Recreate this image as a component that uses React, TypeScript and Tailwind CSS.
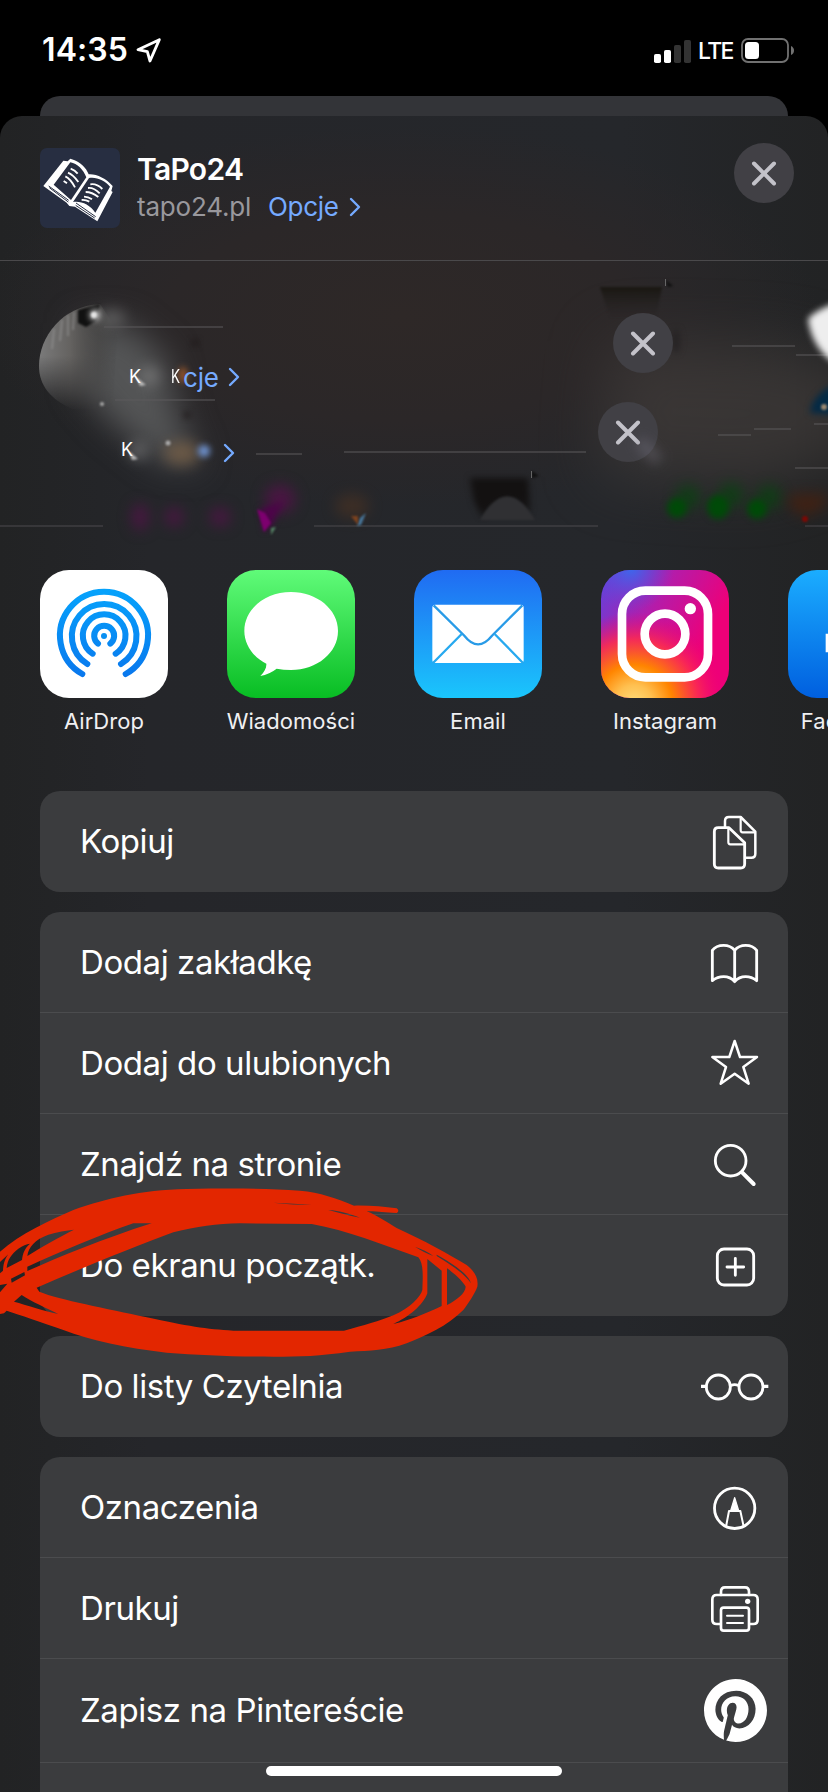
import type { ReactNode } from "react";
import { FaPinterest } from "react-icons/fa";

function StatusBar() {
  return (
    <div className="flex h-24 items-start justify-between pl-[42px] pr-[33px] pt-[30px] text-white">
      <div className="flex items-center">
        <span className="text-[32px] font-semibold leading-[40px] tracking-[0.1px]">14:35</span>
        <svg className="ml-[6px] h-[30px] w-[30px]" viewBox="400 104 90 90" fill="none" stroke="#fff" strokeWidth="8.500" strokeLinejoin="round">
          <path d="M476 118 L412 148 L440 154 L448 182 Z" />
        </svg>
      </div>
      <div className="flex items-center pt-px">
        <svg className="h-[24px] w-[38px]" viewBox="0 0 38 24">
          <rect x="0" y="15" width="7" height="9" rx="1.8" fill="#fff" />
          <rect x="10" y="11" width="7" height="13" rx="1.8" fill="#fff" />
          <rect x="20" y="6" width="7" height="18" rx="1.8" fill="#333" />
          <rect x="30" y="1" width="7" height="23" rx="1.8" fill="#333" />
        </svg>
        <span className="ml-[6px] w-[38px] whitespace-nowrap pt-px text-[23px] font-medium leading-[38px] tracking-[-1.7px]">LTE</span>
        <svg className="ml-[5px] h-[26px] w-[54px]" viewBox="0 0 54 26">
          <rect x="1" y="1" width="46" height="23" rx="6" fill="none" stroke="#717171" strokeWidth="1.8" />
          <rect x="4" y="4" width="14" height="17" rx="3.5" fill="#fff" />
          <path d="M50 8 Q53 9.500 53 12.500 Q53 15.500 50 17 Z" fill="#717171" />
        </svg>
      </div>
    </div>
  );
}

function CloseButton({ className = "" }: { className?: string }) {
  return (
    <button className={`flex h-[60px] w-[60px] items-center justify-center rounded-full bg-[#414045] ${className}`}>
      <svg className="h-[26px] w-[26px]" viewBox="0 0 26 26" stroke="#c3c2c9" strokeWidth="4" strokeLinecap="round">
        <path d="M3 3.500 L23 23.500 M23 3.500 L3 23.500" />
      </svg>
    </button>
  );
}

function Chevron({ className = "" }: { className?: string }) {
  return (
    <svg className={`h-[20px] w-[12px] ${className}`} viewBox="0 0 12 20" fill="none" stroke="#75aaff" strokeWidth="2.4" strokeLinecap="round" strokeLinejoin="round">
      <path d="M2 2 L10 10 L2 18" />
    </svg>
  );
}

function BookLogo() {
  return (
    <svg className="h-[80px] w-[80px] rounded-[7px] bg-[#272e41]" viewBox="120 444 240 240">
      <path fill="#fff" d="M190 482 L203 484 L211 476 L222 480 C240 486 259 503 266 523 C288 521 318 535 338 558 L334 573 L338 576 L292 664 L225 620 L208 618 L200 608 L130 558 Z" />
      <path fill="#272e41" d="M211 487 C232 491 250 509 259 532 L213 600 L161 554 Z M267 534 C289 530 315 541 330 560 L286 638 C270 614 243 602 219 606 Z" />
      <path fill="none" stroke="#272e41" strokeWidth="3" d="M146 558 L206 601 M148 563 L205 606 M228 609 L287 650 M227 616 L284 654" />
      <path fill="none" stroke="#fff" strokeWidth="5.500" d="M212 506 Q225 511 233 521 M204 518 Q220 525 235 546 M196 529 Q212 537 225 562 M191 543 L201 550 M271 553 Q290 550 307 567 M264 564 Q281 562 299 580 M257 576 Q276 576 295 591 M252 590 Q264 590 276 598 M245 600 Q257 599 268 605" />
    </svg>
  );
}

function SheetHeader() {
  return (
    <header className="flex h-[145px] items-start border-b border-[#4a494b] pl-10 pr-[34px] pt-[27px]">
      <div className="pt-[5px]">
        <BookLogo />
      </div>
      <div className="ml-[17px] flex flex-col pt-[7px]">
        <h1 className="text-[30px] font-semibold leading-[38px] tracking-[-0.7px] text-white">TaPo24</h1>
        <div className="flex items-center pt-px text-[26px] leading-[36px]">
          <span className="w-[131px] whitespace-nowrap tracking-[-0.2px] text-[#99989d]">tapo24.pl</span>
          <span className="w-[81px] tracking-[-0.3px] text-[#75aaff]">Opcje</span>
          <Chevron />
        </div>
      </div>
      <div className="ml-auto">
        <CloseButton />
      </div>
    </header>
  );
}

function SmudgeLayer() {
  return (
    <svg className="absolute inset-0 h-[290px] w-[828px]" viewBox="0 0 828 290">
      <defs>
        <filter id="b1" colorInterpolationFilters="sRGB" x="-50%" y="-50%" width="200%" height="200%"><feGaussianBlur stdDeviation="1" /></filter>
        <filter id="b2" colorInterpolationFilters="sRGB" x="-100%" y="-100%" width="300%" height="300%"><feGaussianBlur stdDeviation="3" /></filter>
        <filter id="b5" colorInterpolationFilters="sRGB" filterUnits="userSpaceOnUse" x="-50" y="-50" width="930" height="390"><feGaussianBlur stdDeviation="7" /></filter>
        <filter id="b14" colorInterpolationFilters="sRGB" filterUnits="userSpaceOnUse" x="-100" y="-100" width="1100" height="500"><feGaussianBlur stdDeviation="16" /></filter>
        <filter id="b30" colorInterpolationFilters="sRGB" filterUnits="userSpaceOnUse" x="-100" y="-100" width="1100" height="500"><feGaussianBlur stdDeviation="30" /></filter>
        <linearGradient id="face" x1="0" x2="1">
          <stop offset="0" stopColor="#7a7a7a" />
          <stop offset="0.4" stopColor="#646260" />
          <stop offset="0.75" stopColor="#4a4948" stopOpacity="0.7" />
          <stop offset="1" stopColor="#434343" stopOpacity="0" />
        </linearGradient>
        <linearGradient id="faceFade" x1="0" x2="0" y1="0" y2="1">
          <stop offset="0.5" stopColor="#fff" />
          <stop offset="1" stopColor="#000" />
        </linearGradient>
        <mask id="faceMask" maskUnits="userSpaceOnUse" x="30" y="40" width="100" height="110">
          <rect x="30" y="40" width="100" height="110" fill="url(#faceFade)" />
        </mask>
        <linearGradient id="fadeUp" x1="0" x2="0" y1="0" y2="1">
          <stop offset="0" stopColor="#1a1712" />
          <stop offset="1" stopColor="#252222" stopOpacity="0" />
        </linearGradient>
      </defs>
      <path filter="url(#b14)" fill="#545556" d="M78 62 L125 62 L165 95 L180 160 L200 205 L160 200 L110 160 L80 125 Z" />
      <path filter="url(#b30)" fill="#413c3a" opacity="0.7" d="M610 80 L790 85 L860 110 L860 190 L760 225 L600 215 Z" />
      <path mask="url(#faceMask)" fill="url(#face)" d="M39 105 C39 76 62 45 100 43 L118 70 L112 148 L72 148 C50 138 39 124 39 105 Z" />
      <path d="M78 49 L100 43 L96 60 L86 66 L78 62 Z" fill="#111" filter="url(#b1)" />
      <path d="M54 68 L52 88 M62 59 L60 80 M68 54 L68 75 M74 51 L73 69" stroke="#999" strokeWidth="2" filter="url(#b1)" opacity="0.5" />
      <circle cx="95" cy="54" r="5" fill="#eee" filter="url(#b2)" />
      <circle cx="94" cy="54" r="3" fill="#eee" filter="url(#b1)" />
      <ellipse cx="112" cy="57" rx="13" ry="8" fill="#777" opacity="0.6" filter="url(#b5)" />
      <path d="M104 66.500 H223 M115 139.500 H215 M256 193.500 H302 M344 191.500 H586 M732 85.500 H795 M796 94.500 H828 M718 174.500 H751 M754 168.500 H791 M795 207.500 H828 M814 163.500 H828" transform="translate(0 -0.500)" stroke="#5d5b5d" strokeWidth="1" />
      <path d="M0 265 H103 M314 265 H598 M805 265 H828" stroke="#4c4b4e" strokeWidth="1.200" />
      <circle cx="150" cy="115" r="10" fill="#999" opacity="0.45" filter="url(#b5)" />
      <path d="M136 116 L146 124 L140 125 Z M129 190 L138 198 L132 199 Z" fill="#bbb" filter="url(#b1)" />
      <ellipse cx="138" cy="190" rx="9" ry="9" fill="#999" opacity="0.45" filter="url(#b5)" />
      <circle cx="102" cy="143" r="2" fill="#aaa" filter="url(#b1)" />
      <ellipse cx="183" cy="114" rx="4" ry="8" fill="#995529" filter="url(#b2)" />
      <ellipse cx="182" cy="192" rx="18" ry="12" fill="#755f48" opacity="0.8" filter="url(#b5)" />
      <circle cx="168" cy="182" r="2.500" fill="#aaa" filter="url(#b1)" />
      <ellipse cx="204" cy="190" rx="6" ry="6" fill="#6d91ce" filter="url(#b2)" />
      <circle cx="195" cy="82" r="3" fill="#1c1717" filter="url(#b2)" />
      <circle cx="187" cy="154" r="3" fill="#1c1717" filter="url(#b2)" />
      <g filter="url(#b5)" fill="#4a1643">
        <ellipse cx="140" cy="256" rx="8" ry="13" />
        <ellipse cx="174" cy="256" rx="9" ry="9" />
        <ellipse cx="220" cy="256" rx="10" ry="9" />
        <ellipse cx="280" cy="238" rx="15" ry="14" />
      </g>
      <path d="M260 248 L284 240 L273 262 L264 271 Z" fill="#4d0449" filter="url(#b2)" />
      <path d="M257 248 L265 252 L271 262 L264 271 Z" fill="#7d006f" filter="url(#b1)" />
      <path d="M276 266 L271 274 L271 267 Z" fill="#548364" filter="url(#b1)" />
      <ellipse cx="352" cy="245" rx="17" ry="12" fill="#4c3322" opacity="0.6" filter="url(#b5)" />
      <path d="M360 257 L366 252 L361 264 L357 265 Z" fill="#48779c" filter="url(#b1)" />
      <path d="M351 255 L358 255 L358 264 Z" fill="#7d431f" filter="url(#b1)" />
      <path d="M600 26 H662 L656 57 H610 Z" fill="url(#fadeUp)" filter="url(#b1)" />
      <path d="M470 217 H528 L530 252 Q507 222 482 256 L474 240 Z" fill="#131111" filter="url(#b2)" />
      <path d="M480 259 Q507 212 535 259 Z" fill="#303033" filter="url(#b1)" />
      <path d="M666 19 L673 25 L668 26 Z M532 210 L539 215 L532 217 Z" fill="#111" filter="url(#b1)" />
      <path d="M665.500 18 V25 M531.500 210 V217" stroke="#666" />
      <ellipse cx="676" cy="80" rx="4" ry="12" fill="#262324" filter="url(#b2)" />
      <g filter="url(#b5)" fill="#0a4211" opacity="0.8">
        <ellipse cx="688" cy="236" rx="12" ry="12" />
        <ellipse cx="731" cy="234" rx="12" ry="12" />
        <ellipse cx="769" cy="236" rx="12" ry="12" />
      </g>
      <g filter="url(#b2)" fill="#004a08">
        <ellipse cx="677" cy="247" rx="10" ry="10" />
        <ellipse cx="718" cy="246" rx="11" ry="12" />
        <ellipse cx="757" cy="248" rx="10" ry="10" />
      </g>
      <path d="M790 233 H828 L826 245 L805 256 L788 245 Z" fill="#46200f" opacity="0.8" filter="url(#b5)" />
      <circle cx="805" cy="258" r="3" fill="#7d0804" filter="url(#b1)" />
      <path d="M808 58 Q814 50 836 42 V103 Q812 88 808 58 Z" fill="#eee" filter="url(#b2)" />
      <path d="M840 121 Q812 132 810 152 L840 154 Z" fill="#042a45" filter="url(#b2)" />
      <circle cx="824" cy="146" r="3" fill="#9c8970" filter="url(#b1)" />
    </svg>
  );
}

function Suggestions() {
  return (
    <section className="relative h-[289px]">
      <SmudgeLayer />
      <span className="absolute left-[129px] top-[106px] text-[18px] leading-[20px] text-white">K</span>
      <span className="absolute left-[171px] top-[106px] w-[9px] origin-left scale-x-75 text-[18px] leading-[20px] text-white">K</span>
      <span className="absolute left-[183px] top-[98px] text-[26px] leading-[38px] tracking-[-0.2px] text-[#75aaff]">cje</span>
      <Chevron className="absolute left-[228px] top-[106px]" />
      <span className="absolute left-[121px] top-[179px] text-[18px] leading-[20px] text-white">K</span>
      <Chevron className="absolute left-[223px] top-[182px]" />
      <CloseButton className="absolute left-[613px] top-[52px]" />
      <CloseButton className="absolute left-[598px] top-[141px]" />
      <span className="absolute left-[635px] top-[184px] h-3 w-7 rotate-45 bg-[#777582]/40 blur-[6px]" />
    </section>
  );
}

function AirDropIcon() {
  return (
    <svg className="h-full w-full" viewBox="120 60 384 384" fill="none" stroke="url(#air)" strokeWidth="18" strokeLinecap="round">
      <defs>
        <linearGradient id="air" gradientUnits="userSpaceOnUse" x1="0" y1="116" x2="0" y2="382">
          <stop offset="0" stopColor="#06a3fc" />
          <stop offset="1" stopColor="#0977ed" />
        </linearGradient>
      </defs>
      <rect x="120" y="60" width="384" height="384" fill="#fff" stroke="none" />
      <path d="M247 372 A132 132 0 1 1 377 372" />
      <path d="M262 342 A97 97 0 1 1 363 342" />
      <path d="M278 311 A64 64 0 1 1 347 311" />
      <path d="M294 281 A30 30 0 1 1 331 281" />
      <circle cx="312" cy="258" r="9" fill="#0990f3" stroke="none" />
    </svg>
  );
}

function MessagesIcon() {
  return (
    <svg className="h-full w-full" viewBox="681 60 384 384">
      <defs>
        <linearGradient id="msg" x1="0" x2="0" y1="0" y2="1">
          <stop offset="0" stopColor="#60fb79" />
          <stop offset="1" stopColor="#08bd23" />
        </linearGradient>
      </defs>
      <rect x="681" y="60" width="384" height="384" fill="url(#msg)" />
      <path fill="#fff" d="M873 126 C951 126 1014 178 1014 243 C1014 308 951 360 873 360 Q850 360 830 356 Q808 373 781 378 C793 366 800 354 799 341 C759 321 733 284 733 243 C733 178 795 126 873 126 Z" />
    </svg>
  );
}

function MailIcon() {
  return (
    <svg className="h-full w-full" viewBox="0 60 384 384">
      <defs>
        <linearGradient id="mail" x1="0" x2="0" y1="0" y2="1">
          <stop offset="0" stopColor="#206bf2" />
          <stop offset="1" stopColor="#1ac6fc" />
        </linearGradient>
      </defs>
      <rect y="60" width="384" height="384" fill="url(#mail)" />
      <rect x="55" y="164" width="274" height="175" rx="9" fill="#fff" />
      <path d="M59 166 L151 257 Q192 309 234 257 L325 166" fill="none" stroke="#299be7" strokeWidth="7" />
      <path d="M57 339 L143 252 M327 339 L242 252" fill="none" stroke="#27a9ef" strokeWidth="7" />
    </svg>
  );
}

function InstagramIcon() {
  return (
    <svg className="h-full w-full" viewBox="561 60 384 384" fill="none" stroke="#fff" strokeWidth="26">
      <defs>
        <linearGradient id="igBase" x1="0" y1="0" x2="0.850" y2="0.500">
          <stop offset="0" stopColor="#5b45e0" />
          <stop offset="0.500" stopColor="#b41caa" />
          <stop offset="1" stopColor="#ee0078" />
        </linearGradient>
        <radialGradient id="igWarm" gradientUnits="userSpaceOnUse" cx="660" cy="460" r="275">
          <stop offset="0" stopColor="#ffdc7a" />
          <stop offset="0.200" stopColor="#ffc050" />
          <stop offset="0.420" stopColor="#ff8500" />
          <stop offset="0.700" stopColor="#fb2c50" stopOpacity="0.900" />
          <stop offset="1" stopColor="#ed0078" stopOpacity="0" />
        </radialGradient>
        <radialGradient id="igBlue" gradientUnits="userSpaceOnUse" cx="650" cy="55" r="130">
          <stop offset="0" stopColor="#3b68ed" />
          <stop offset="1" stopColor="#6644d6" stopOpacity="0" />
        </radialGradient>
      </defs>
      <rect x="561" y="60" width="384" height="384" fill="url(#igBase)" stroke="none" />
      <rect x="561" y="60" width="384" height="384" fill="url(#igBlue)" stroke="none" />
      <rect x="561" y="60" width="384" height="384" fill="url(#igWarm)" stroke="none" />
      <rect x="624" y="122" width="258" height="260" rx="70" />
      <circle cx="753" cy="252" r="61" />
      <circle cx="829" cy="176" r="17" fill="#fff" stroke="none" />
    </svg>
  );
}

function FacebookIcon() {
  return (
    <svg className="h-full w-full" viewBox="0 0 384 384">
      <defs>
        <linearGradient id="fb" x1="0" x2="0" y1="0" y2="1">
          <stop offset="0" stopColor="#1badff" />
          <stop offset="1" stopColor="#005fdf" />
        </linearGradient>
      </defs>
      <rect width="384" height="384" fill="url(#fb)" />
      <path fill="#fff" d="M113 191 H160 V155 Q160 84 232 84 H275 V132 H245 Q220 132 220 160 V191 H274 L265 247 H220 V384 H160 V247 H113 Z" />
    </svg>
  );
}

const apps: { name: string; icon: ReactNode }[] = [
  { name: "AirDrop", icon: <AirDropIcon /> },
  { name: "Wiadomości", icon: <MessagesIcon /> },
  { name: "Email", icon: <MailIcon /> },
  { name: "Instagram", icon: <InstagramIcon /> },
  { name: "Facebook", icon: <FacebookIcon /> },
];

function AppRow() {
  return (
    <section className="flex h-[241px] gap-[59px] overflow-hidden pl-10 pt-5">
      {apps.map((app) => (
        <div key={app.name} className="flex w-32 shrink-0 flex-col items-center">
          <div className="h-32 w-32 overflow-hidden rounded-[29px]">{app.icon}</div>
          <span className="mt-[9px] whitespace-nowrap text-[22px] leading-[28px] tracking-[0.05px] text-[#f0f0f2]">{app.name}</span>
        </div>
      ))}
    </section>
  );
}

function Glyph({ viewBox, width = 8.5, children }: { viewBox: string; width?: number; children: ReactNode }) {
  return (
    <svg className="h-[80px] w-[80px]" viewBox={viewBox} fill="none" stroke="#fff" strokeWidth={width} strokeLinecap="round" strokeLinejoin="round">
      {children}
    </svg>
  );
}

const copyGlyph = (
  <Glyph viewBox="405 95 240 240">
    <path d="M475 172 H507 L554 217 V281 Q554 293 542 293 H475 Q463 293 463 281 V184 Q463 172 475 172 Z" />
    <path d="M505 174 V216 Q505 222 511 222 H552" strokeWidth="6.500" />
    <path d="M495 170 V152 Q495 140 507 140 H542 L586 184 V250 Q586 262 574 262 H558" strokeWidth="7.500" />
    <path d="M542 142 V180 Q542 186 548 186 H584" strokeWidth="6.500" />
  </Glyph>
);

const bookGlyph = (
  <Glyph viewBox="405 456 240 240">
    <path d="M524 541 Q512 526 491 526 Q468 526 457 541 V632 Q472 620 491 620 Q511 620 524 635 Q537 620 557 620 Q575 620 590 632 V541 Q579 526 557 526 Q536 526 524 541 V635" />
  </Glyph>
);

const starGlyph = (
  <Glyph viewBox="405 759 240 240" width={7.5}>
    <path d="M524 813 L540 861 H591 L550 891 L566 941 L524 911 L482 941 L498 891 L457 861 H508 Z" />
  </Glyph>
);

const searchGlyph = (
  <Glyph viewBox="405 1062 240 240">
    <circle cx="512" cy="1172" r="46" />
    <path d="M547 1208 L581 1242" strokeWidth="12" />
  </Glyph>
);

const plusGlyph = (
  <Glyph viewBox="405 77 240 240">
    <rect x="472" y="146" width="109" height="108" rx="20" />
    <path d="M501 200 H551 M526 174 V225" />
  </Glyph>
);

const glassesGlyph = (
  <Glyph viewBox="405 440 240 240">
    <circle cx="475" cy="560" r="36" />
    <circle cx="573" cy="560" r="36" />
    <path d="M513 555 Q524 551 535 555" />
    <path d="M428 558 H437 M611 558 H620" strokeWidth="10" strokeLinecap="square" />
  </Glyph>
);

const markupGlyph = (
  <Glyph viewBox="405 801 240 240">
    <circle cx="524" cy="925" r="60.500" />
    <path d="M524 893 L512 932 H536 Z" fill="#fff" strokeWidth="4" />
    <path d="M507 933 L499 975 M541 933 L550 975 M507 933 H541" strokeWidth="6" />
  </Glyph>
);

const printerGlyph = (
  <Glyph viewBox="405 84 240 240" width={8}>
    <path d="M483 165 V155 Q483 142 495 142 H555 Q567 142 567 155 V165" />
    <path d="M480 252 H470 Q457 252 457 239 V178 Q457 165 470 165 H580 Q593 165 593 178 V239 Q593 252 580 252 H570" />
    <rect x="483" y="203" width="84" height="69" rx="8" />
    <path d="M501 227 H549 M501 249 H549" strokeWidth="6" />
    <circle cx="563" cy="184" r="8" fill="#fff" stroke="none" />
  </Glyph>
);

const pinterestGlyph = (
  <div className="flex h-[80px] w-[80px] items-center justify-center">
    <FaPinterest className="h-[65px] w-[65px] text-white" />
  </div>
);

interface Action {
  label: string;
  icon: ReactNode;
  height?: string;
  nudge?: string;
}

const groups: Action[][] = [
  [{ label: "Kopiuj", icon: copyGlyph }],
  [
    { label: "Dodaj zakładkę", icon: bookGlyph },
    { label: "Dodaj do ulubionych", icon: starGlyph },
    { label: "Znajdź na stronie", icon: searchGlyph },
    { label: "Do ekranu początk.", icon: plusGlyph },
  ],
  [{ label: "Do listy Czytelnia", icon: glassesGlyph }],
  [
    { label: "Oznaczenia", icon: markupGlyph },
    { label: "Drukuj", icon: printerGlyph },
    { label: "Zapisz na Pintereście", icon: pinterestGlyph, height: "h-[104px]", nudge: "pb-[2px]" },
  ],
];

function ActionGroups() {
  return (
    <div className="flex flex-col gap-5 px-10">
      {groups.map((rows, g) => {
        const last = g === groups.length - 1;
        return (
          <div key={g} className={`bg-[#3b3c3e] ${last ? "h-[360px] rounded-t-[20px]" : "rounded-[20px]"}`}>
            {rows.map((row, i) => {
              const divided = last || i < rows.length - 1;
              return (
                <div
                  key={row.label}
                  className={`flex items-center justify-between pl-10 pr-[13px] ${row.height ?? "h-[101px]"} ${divided ? "border-b border-[#4b4c4e]" : ""}`}
                >
                  <span className={`whitespace-nowrap text-[33px] leading-[40px] tracking-[-0.42px] text-white ${row.nudge ?? (divided ? "" : "pb-px")}`}>{row.label}</span>
                  {row.icon}
                </div>
              );
            })}
          </div>
        );
      })}
    </div>
  );
}

function Scribble() {
  return (
    <svg className="pointer-events-none absolute left-0 top-[1160px] h-[220px] w-[500px]" viewBox="0 0 1500 660">
      <path
        fill="#e32600"
        fillRule="evenodd"
        d="M0 275 C60 222 150 180 220 150 C320 115 420 90 560 87 C700 85 800 85 900 92 C960 97 1010 115 1062 137 C1110 136 1150 140 1190 145 Q1200 152 1190 159 C1150 157 1130 153 1100 154 C1130 165 1165 190 1190 204 C1270 240 1350 285 1400 315 C1425 335 1436 355 1432 380 C1425 400 1405 430 1390 450 C1340 500 1280 525 1220 550 C1160 572 1110 572 1050 575 C960 588 900 590 820 590 C700 590 600 585 500 578 C380 565 270 540 190 510 C120 485 60 465 20 452 L12 460 L0 462 Z
        M118 395 C180 420 320 445 440 472 C560 498 620 508 700 512 L1032 512 C1090 497 1140 482 1180 466 C1230 445 1262 410 1267 390 C1269 340 1270 310 1255 292 C1150 255 1040 210 935 192 L720 190 C650 191 590 200 520 217 C400 262 250 322 110 383 Z
        M1282 297 L1325 332 L1325 438 C1280 460 1230 480 1180 492 C1225 472 1270 435 1282 400 Z
        M1341 325 C1370 345 1393 370 1397 380 C1396 400 1370 420 1341 435 Z
        M1310 284 C1350 306 1405 340 1413 370 C1395 342 1350 312 1310 288 Z
        M82 333 C180 290 310 236 455 190 L400 190 C300 224 180 277 82 320 Z
        M82 288 C85 262 105 238 145 224 C170 216 200 211 222 209 C180 230 120 264 82 288 Z
        M20 324 C22 298 35 282 55 266 C68 256 80 253 90 251 C74 265 68 280 66 300 Z
        M0 306 L25 283 C12 300 10 316 9 332 L0 340 Z
        M33 356 L73 336 L75 346 L35 368 Z
        M65 405 C95 425 140 445 175 462 C130 453 80 435 42 425 Z
        M0 375 L22 371 L0 397 Z
        M820 128 C860 130 900 131 935 135 C900 134 860 133 820 128 Z
        M985 150 C1020 152 1050 162 1080 173 C1045 167 1015 158 985 150 Z
        M1245 260 C1265 267 1285 276 1300 288 C1280 281 1260 270 1245 260 Z"
      />
    </svg>
  );
}

export default function App() {
  return (
    <div className="relative h-[1792px] w-[828px] overflow-hidden bg-black font-['Inter','Liberation_Sans',sans-serif]">
      <StatusBar />
      <div className="mx-10 h-[20px] rounded-t-[20px] bg-[#333438]" />
      <main className="h-[1676px] overflow-hidden rounded-t-[22px] bg-[#26272a] bg-[radial-gradient(ellipse_420px_190px_at_400px_200px,#2e2827_0%,#2b2728_55%,transparent_100%),linear-gradient(90deg,#222324_0%,#25262a_18%,#25272b_75%,#222324_100%)]">
        <SheetHeader />
        <Suggestions />
        <AppRow />
        <ActionGroups />
      </main>
      <Scribble />
      <div className="absolute bottom-4 left-[266px] h-[10px] w-[296px] rounded-full bg-white" />
    </div>
  );
}
